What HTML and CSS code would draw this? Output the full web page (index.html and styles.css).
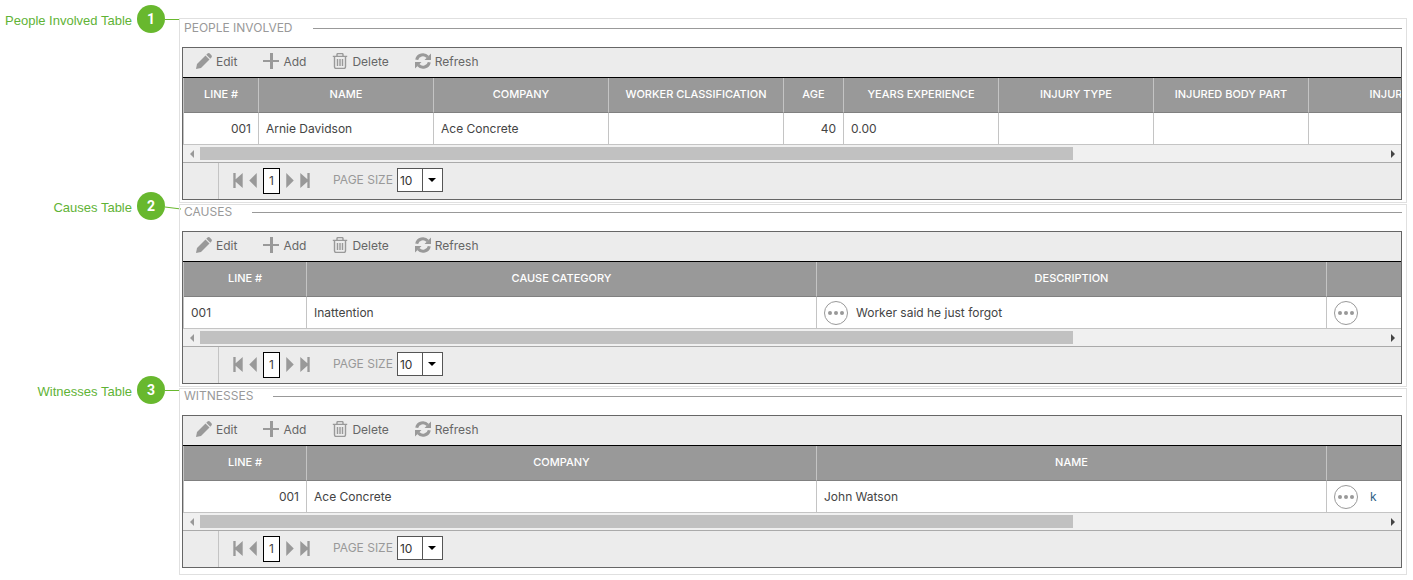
FILE: index.html
```html
<!DOCTYPE html>
<html lang="en">
<head>
    <meta charset="UTF-8">
    <meta name="viewport" content="width=device-width, initial-scale=1.0">
    <title>Incident Tables</title>
    <link rel="stylesheet" href="styles.css">
</head>
<body>
    <!-- Shared icons -->
    <svg class="sprite" aria-hidden="true">
        <symbol id="edit" viewBox="0 0 16 16">
            <path d="M0 16l1-5L9.500 2.500l4 4L5 15z"/>
            <path d="M10.300 1.700L11.500.6q1.200-1 2.300 0L15.400 2.200q1 1.200 0 2.300l-1.100 1.200z"/>
        </symbol>
        <symbol id="add" viewBox="0 0 16 16">
            <path d="M7 0h3v7h6v2h-6v7H7V9H0V7h7z"/>
        </symbol>
        <symbol id="delete" viewBox="0 0 16 16">
            <path d="M5 3V1.500Q5 .6 6 .6h4q1 0 1 .9V3M.8 3.400h14.400M2.500 3.500v10.300q0 1.600 1.500 1.600h8q1.500 0 1.500-1.600V3.500M5.500 6v7M8 6v7M10.500 6v7" fill="none" stroke="currentColor" stroke-width="1.400"/>
        </symbol>
        <symbol id="refresh" viewBox="0 0 16 16">
            <path d="M1.700 6.800A6.300 6.300 0 0 1 12.700 4M14.300 9.200A6.300 6.300 0 0 1 3.300 12" fill="none" stroke="currentColor" stroke-width="3"/>
            <path d="M16 .5v6.500H9.500zM0 15.500V9h6.500z"/>
        </symbol>
        <symbol id="prev" viewBox="0 0 10 16">
            <path d="M9 0v16L1 8z"/>
        </symbol>
        <symbol id="first" viewBox="0 0 10 16">
            <path d="M0 0h2.500v6.700L10 0v16L2.500 9.300V16H0z"/>
        </symbol>
        <symbol id="next" viewBox="0 0 10 16">
            <path d="M1 0v16l8-8z"/>
        </symbol>
        <symbol id="last" viewBox="0 0 10 16">
            <path d="M10 0H7.500v6.700L0 0v16l7.500-6.700V16H10z"/>
        </symbol>
        <symbol id="left" viewBox="0 0 4 8">
            <path d="M4 0v8L0 4z"/>
        </symbol>
        <symbol id="right" viewBox="0 0 4 8">
            <path d="M0 0v8l4-4z"/>
        </symbol>
    </svg>

    <!-- People involved -->
    <div class="row">
        <div class="note">
            <span class="note-text">People Involved Table</span>
            <span class="badge">1</span>
            <svg class="line" viewBox="0 0 14 28"><path d="M0 14.500h14"/></svg>
        </div>
        <section class="panel panel-first">
            <h2 class="legend">PEOPLE INVOLVED</h2>
            <div class="grid">
                <div class="toolbar">
                    <button class="tool"><svg><use href="#edit"/></svg>Edit</button>
                    <button class="tool"><svg><use href="#add"/></svg>Add</button>
                    <button class="tool"><svg><use href="#delete"/></svg>Delete</button>
                    <button class="tool"><svg><use href="#refresh"/></svg>Refresh</button>
                </div>
                <div class="scroll">
                    <table class="people">
                        <colgroup>
                            <col class="w-line"><col class="w-name"><col class="w-name"><col class="w-name"><col class="w-age">
                            <col class="w-type"><col class="w-type"><col class="w-type"><col class="w-type">
                        </colgroup>
                        <tr>
                            <th>LINE #</th>
                            <th>NAME</th>
                            <th>COMPANY</th>
                            <th>WORKER CLASSIFICATION</th>
                            <th>AGE</th>
                            <th>YEARS EXPERIENCE</th>
                            <th>INJURY TYPE</th>
                            <th>INJURED BODY PART</th>
                            <th>INJUR</th>
                        </tr>
                        <tr>
                            <td class="num">001</td>
                            <td>Arnie Davidson</td>
                            <td>Ace Concrete</td>
                            <td></td>
                            <td class="num">40</td>
                            <td>0.00</td>
                            <td></td>
                            <td></td>
                            <td></td>
                        </tr>
                    </table>
                </div>
                <div class="scrollbar">
                    <button class="arrow arrow-off" aria-label="Scroll left"><svg><use href="#left"/></svg></button>
                    <div class="track"><div class="thumb"></div></div>
                    <button class="arrow" aria-label="Scroll right"><svg><use href="#right"/></svg></button>
                </div>
                <div class="pager">
                    <div class="pager-side"></div>
                    <div class="pages">
                        <button class="nav" aria-label="First page"><svg><use href="#first"/></svg></button>
                        <button class="nav" aria-label="Previous page"><svg><use href="#prev"/></svg></button>
                        <button class="page">1</button>
                        <button class="nav" aria-label="Next page"><svg><use href="#next"/></svg></button>
                        <button class="nav" aria-label="Last page"><svg><use href="#last"/></svg></button>
                    </div>
                    <label class="size-label" for="size1">PAGE SIZE</label>
                    <select class="size" id="size1"><option>10</option></select>
                </div>
            </div>
        </section>
    </div>

    <!-- Causes -->
    <div class="row">
        <div class="note">
            <span class="note-text">Causes Table</span>
            <span class="badge">2</span>
            <svg class="line" viewBox="0 0 14 28"><path d="M0 15l16 2"/></svg>
        </div>
        <section class="panel">
            <h2 class="legend">CAUSES</h2>
            <div class="grid">
                <div class="toolbar">
                    <button class="tool"><svg><use href="#edit"/></svg>Edit</button>
                    <button class="tool"><svg><use href="#add"/></svg>Add</button>
                    <button class="tool"><svg><use href="#delete"/></svg>Delete</button>
                    <button class="tool"><svg><use href="#refresh"/></svg>Refresh</button>
                </div>
                <div class="scroll">
                    <table class="wide">
                        <colgroup><col class="w-first"><col class="w-wide"><col class="w-wide"><col class="w-wide"></colgroup>
                        <tr>
                            <th>LINE #</th>
                            <th>CAUSE CATEGORY</th>
                            <th>DESCRIPTION</th>
                            <th></th>
                        </tr>
                        <tr>
                            <td>001</td>
                            <td>Inattention</td>
                            <td><div class="with-more"><button class="more" aria-label="More"><i></i><i></i><i></i></button>Worker said he just forgot</div></td>
                            <td><div class="with-more"><button class="more" aria-label="More"><i></i><i></i><i></i></button></div></td>
                        </tr>
                    </table>
                </div>
                <div class="scrollbar">
                    <button class="arrow arrow-off" aria-label="Scroll left"><svg><use href="#left"/></svg></button>
                    <div class="track"><div class="thumb"></div></div>
                    <button class="arrow" aria-label="Scroll right"><svg><use href="#right"/></svg></button>
                </div>
                <div class="pager">
                    <div class="pager-side"></div>
                    <div class="pages">
                        <button class="nav" aria-label="First page"><svg><use href="#first"/></svg></button>
                        <button class="nav" aria-label="Previous page"><svg><use href="#prev"/></svg></button>
                        <button class="page">1</button>
                        <button class="nav" aria-label="Next page"><svg><use href="#next"/></svg></button>
                        <button class="nav" aria-label="Last page"><svg><use href="#last"/></svg></button>
                    </div>
                    <label class="size-label" for="size2">PAGE SIZE</label>
                    <select class="size" id="size2"><option>10</option></select>
                </div>
            </div>
        </section>
    </div>

    <!-- Witnesses -->
    <div class="row">
        <div class="note">
            <span class="note-text">Witnesses Table</span>
            <span class="badge">3</span>
            <svg class="line" viewBox="0 0 14 28"><path d="M0 14.500h14"/></svg>
        </div>
        <section class="panel panel-last">
            <h2 class="legend">WITNESSES</h2>
            <div class="grid">
                <div class="toolbar">
                    <button class="tool"><svg><use href="#edit"/></svg>Edit</button>
                    <button class="tool"><svg><use href="#add"/></svg>Add</button>
                    <button class="tool"><svg><use href="#delete"/></svg>Delete</button>
                    <button class="tool"><svg><use href="#refresh"/></svg>Refresh</button>
                </div>
                <div class="scroll">
                    <table class="wide">
                        <colgroup><col class="w-first"><col class="w-wide"><col class="w-wide"><col class="w-wide"></colgroup>
                        <tr>
                            <th>LINE #</th>
                            <th>COMPANY</th>
                            <th>NAME</th>
                            <th></th>
                        </tr>
                        <tr>
                            <td class="num">001</td>
                            <td>Ace Concrete</td>
                            <td>John Watson</td>
                            <td><div class="with-more"><button class="more" aria-label="More"><i></i><i></i><i></i></button><a class="link" href="#">k</a></div></td>
                        </tr>
                    </table>
                </div>
                <div class="scrollbar">
                    <button class="arrow arrow-off" aria-label="Scroll left"><svg><use href="#left"/></svg></button>
                    <div class="track"><div class="thumb"></div></div>
                    <button class="arrow" aria-label="Scroll right"><svg><use href="#right"/></svg></button>
                </div>
                <div class="pager">
                    <div class="pager-side"></div>
                    <div class="pages">
                        <button class="nav" aria-label="First page"><svg><use href="#first"/></svg></button>
                        <button class="nav" aria-label="Previous page"><svg><use href="#prev"/></svg></button>
                        <button class="page">1</button>
                        <button class="nav" aria-label="Next page"><svg><use href="#next"/></svg></button>
                        <button class="nav" aria-label="Last page"><svg><use href="#last"/></svg></button>
                    </div>
                    <label class="size-label" for="size3">PAGE SIZE</label>
                    <select class="size" id="size3"><option>10</option></select>
                </div>
            </div>
        </section>
    </div>
</body>
</html>
```
FILE: styles.css
```css
* {
    box-sizing: border-box;
}
body {
    margin: 0;
    padding: 18px 6px 0 0;
    background-color: #fff;
    color: #444;
    font-family: Inter, sans-serif;
    font-size: 12px;
}
button, select {
    margin: 0;
    padding: 0;
    border: 0;
    background: none;
    color: inherit;
    font: inherit;
}
svg {
    display: block;
    fill: currentColor;
}
.sprite {
    display: none;
}
.row {
    display: flex;
    align-items: flex-start;
    margin-bottom: 1px;
}

/* green labels on the left */
.note {
    flex: 0 0 179px;
    display: flex;
    align-items: center;
    justify-content: flex-end;
    margin-top: -13px;
    color: #5fb336;
    font-family: "Liberation Sans", Arial, sans-serif;
    font-size: 13px;
}
.row + .row .note {
    margin-top: -12px;
}
.note-text {
    padding-top: 3px;
}
.badge {
    width: 28px;
    height: 28px;
    margin-left: 5px;
    border-radius: 50%;
    background-color: #68b82e;
    color: #fff;
    font-family: Roboto, sans-serif;
    font-size: 14px;
    font-weight: bold;
    line-height: 28px;
    text-align: center;
}
.line {
    width: 14px;
    height: 28px;
    overflow: visible;
    fill: none;
    stroke: #68b82e;
}

.panel {
    flex: 1;
    min-width: 0;
    padding: 0 4px 2px 2px;
    border: 1px solid #e0e0e0;
}
.panel-first {
    padding-top: 2px;
}
.panel-last {
    padding-bottom: 6px;
}
.legend {
    display: flex;
    align-items: center;
    gap: 20px;
    margin: 0;
    padding: 0 0 12px 2px;
    color: #999;
    font-size: 12px;
    font-weight: 400;
    line-height: 14px;
}
.legend::after {
    content: "";
    flex: 1;
    border-top: 1px solid #999;
}
.grid {
    border: 1px solid #666;
    background-color: #ececec;
}

.toolbar {
    display: flex;
    gap: 26px;
    height: 30px;
    padding: 0 13px 3px;
    border-bottom: 1px solid #000;
}
.tool {
    display: flex;
    align-items: center;
    gap: 4px;
    color: #666;
}
.tool svg {
    width: 16px;
    height: 16px;
    color: #999;
}

.scroll {
    overflow: hidden;
}
table {
    table-layout: fixed;
    border-collapse: separate;
    border-spacing: 0;
    border-left: 1px solid #c4c4c4;
    background-color: #fff;
}
.people {
    width: 1281px;
}
.wide {
    width: 1654px;
}
.w-line {
    width: 75px;
}
.w-name {
    width: 175px;
}
.w-age {
    width: 60px;
}
.w-type {
    width: 155px;
}
.w-first {
    width: 123px;
}
.w-wide {
    width: 510px;
}
th, td {
    padding: 0 7px;
    border-right: 1px solid #c4c4c4;
    white-space: nowrap;
}
th {
    height: 35px;
    padding-bottom: 2px;
    border-bottom: 1px solid #808080;
    background-color: #999;
    color: #fff;
    font-size: 11px;
    font-weight: 500;
    text-align: center;
}
td {
    height: 32px;
    border-bottom: 1px solid #c4c4c4;
}
.num {
    text-align: right;
}
.with-more {
    display: flex;
    align-items: center;
    gap: 8px;
}
.with-more .link {
    margin-left: 4px;
    color: #2f5f86;
    text-decoration: none;
}
.more {
    display: flex;
    align-items: center;
    justify-content: center;
    gap: 2px;
    width: 24px;
    height: 24px;
    border: 1px solid #999;
    border-radius: 50%;
}
.more i {
    width: 4px;
    height: 4px;
    border-radius: 50%;
    background-color: #999;
}

.scrollbar {
    display: flex;
    height: 18px;
    border-bottom: 1px solid #aaa;
    background-color: #f0f0f0;
}
.arrow {
    display: flex;
    align-items: center;
    justify-content: center;
    width: 17px;
    color: #444;
}
.arrow-off {
    color: #999;
}
.arrow svg {
    width: 4px;
    height: 8px;
}
.track {
    flex: 1;
    padding: 2px 0;
}
.thumb {
    width: 73.7%;
    height: 13px;
    background-color: #c1c1c1;
}

.pager {
    display: flex;
    height: 36px;
    color: #999;
}
.pager-side {
    width: 36px;
    border-right: 1px solid #c4c4c4;
}
.pages {
    display: flex;
    align-items: center;
    gap: 5px;
    padding: 0 23px 0 14px;
}
.nav {
    padding-bottom: 1px;
}
.nav svg {
    width: 10px;
    height: 15px;
}
.page {
    width: 17px;
    height: 26px;
    padding-bottom: 2px;
    border: 1px solid #000;
    background-color: #fff;
    color: #444;
}
.size-label {
    padding: 9px 4px 0 0;
    line-height: 15px;
}
.size {
    width: 46px;
    height: 24px;
    margin-top: 5px;
    padding-left: 2px;
    border: 1px solid #555;
    border-radius: 0;
    appearance: none;
    background: #fff url("data:image/svg+xml,%3Csvg xmlns='http://www.w3.org/2000/svg' width='20' height='22'%3E%3Cpath d='M0 0h1v22H0z' fill='%23555'/%3E%3Cpath d='M6 9h8l-4 4z' fill='%23000'/%3E%3C/svg%3E") no-repeat right center;
    color: #333;
}
```
